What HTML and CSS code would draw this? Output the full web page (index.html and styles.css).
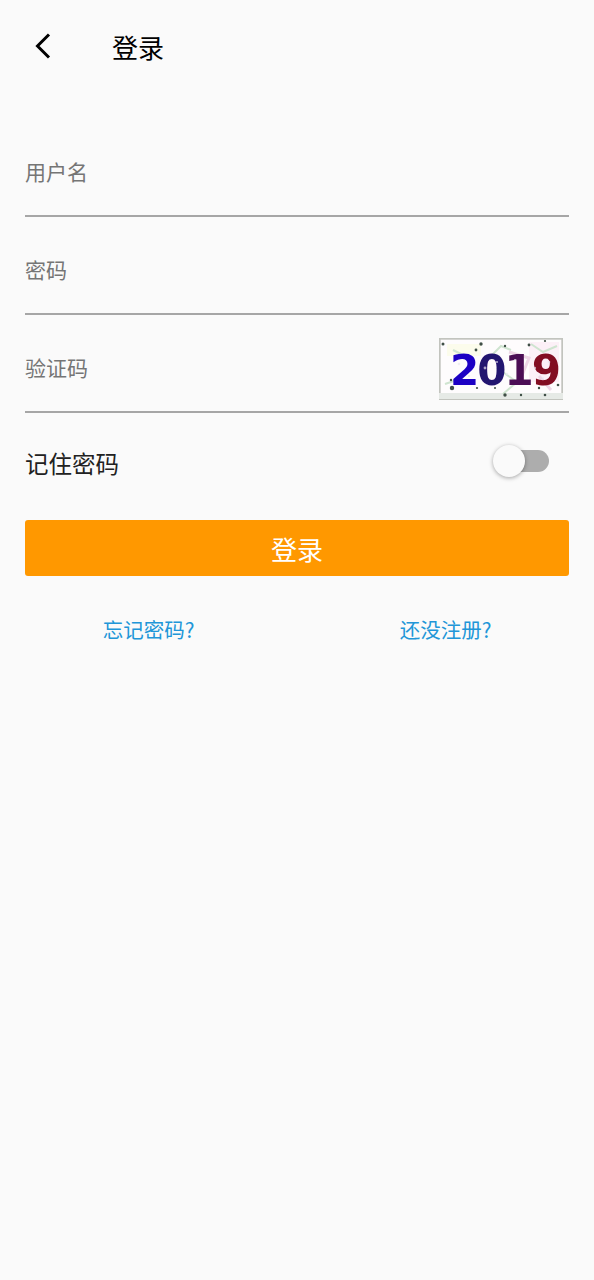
FILE: index.html
```html
<!DOCTYPE html>
<html lang="zh">
<head>
<meta charset="utf-8">
<title>登录</title>
<link rel="stylesheet" href="styles.css">
</head>
<body>
<div class="page">
  <header class="topbar">
    <svg class="back" width="20" height="28" viewBox="0 0 20 28" aria-hidden="true"><path d="M16 2.5 L4.5 14 L16 25.5" fill="none" stroke="#000" stroke-width="3"/></svg>
    <h1 class="title">登录</h1>
  </header>
  <form class="form">
    <div class="field"><span class="placeholder">用户名</span></div>
    <div class="field"><span class="placeholder">密码</span></div>
    <div class="field field-captcha">
      <span class="placeholder placeholder-captcha">验证码</span>
      <svg class="captcha" width="124" height="62" viewBox="0 0 124 62" aria-label="2019">
        <defs>
          <filter id="soft" x="-5%" y="-5%" width="110%" height="110%"><feGaussianBlur stdDeviation="0.7"/></filter>
        </defs>
        <rect width="124" height="62" fill="#fefcfd"/>
        <g filter="url(#soft)">
          <rect x="90" y="4" width="30" height="40" fill="#fcf0f7"/>
          <rect x="8" y="6" width="34" height="12" fill="#fcfcec"/>
          <rect x="0.8" y="0.8" width="122.4" height="60.4" fill="none" stroke="#c2c4be" stroke-width="1.8"/>
          <rect x="0" y="55" width="124" height="6" fill="#e6eae6"/>
          <path d="M52 18 L62 8 L72 12 M58 30 L78 44 L64 56 M92 6 L104 14 L118 8 M14 12 L30 20 M6 46 L24 40" stroke="#cfe4d0" stroke-width="2" fill="none"/>
          <path d="M70 14 L90 20 L82 40 M100 38 L112 52" stroke="#eed6e6" stroke-width="3" fill="none"/>
          <text class="captcha-text" x="11" y="47"><tspan fill="#1c00c4">2</tspan><tspan fill="#241270">0</tspan><tspan fill="#4c1054">1</tspan><tspan fill="#820820">9</tspan></text>
          <g fill="#e8e8f0" opacity=".7">
            <circle cx="20" cy="26" r="1.3"/><circle cx="30" cy="38" r="1.2"/><circle cx="46" cy="30" r="1.4"/>
            <circle cx="58" cy="24" r="1.1"/><circle cx="68" cy="36" r="1.3"/><circle cx="76" cy="22" r="1.1"/>
            <circle cx="96" cy="30" r="1.2"/><circle cx="110" cy="24" r="1.3"/><circle cx="104" cy="40" r="1.1"/>
          </g>
          <g fill="#3f4f46">
            <circle cx="42" cy="6" r="1.7"/><circle cx="4" cy="6" r="1.5"/><circle cx="37" cy="12" r="1.4"/>
            <circle cx="66" cy="8" r="1.2"/><circle cx="90" cy="7" r="1.4"/><circle cx="106" cy="3" r="1.1"/>
            <circle cx="12" cy="42" r="1.2"/><circle cx="13" cy="50" r="2.2"/><circle cx="66" cy="57" r="1.7"/>
            <circle cx="82" cy="57" r="1.2"/><circle cx="106" cy="57" r="1.3"/><circle cx="119" cy="47" r="1.3"/>
            <circle cx="38" cy="50" r="1.1"/><circle cx="100" cy="50" r="1.2"/><circle cx="56" cy="50" r="1"/>
          </g>
        </g>
      </svg>
    </div>
    <div class="remember">
      <span class="remember-label">记住密码</span>
      <span class="switch"><span class="switch-thumb"></span></span>
    </div>
    <button class="submit" type="button">登录</button>
    <div class="links">
      <a class="link">忘记密码?</a>
      <a class="link">还没注册?</a>
    </div>
  </form>
</div>
</body>
</html>
```
FILE: styles.css
```css
* { box-sizing: border-box; }
html, body { margin: 0; padding: 0; }
body {
  background: #fafafa;
  font-family: "Noto Sans CJK SC", "Noto Sans", sans-serif;
  height: 1280px;
  overflow: hidden;
}
.page { display: flex; flex-direction: column; }
.topbar {
  display: flex;
  align-items: center;
  height: 98px;
  padding-left: 33px;
}
.back { display: block; margin-top: -7px; }
.title {
  margin: -4px 0 0 59px;
  font-size: 26px;
  font-weight: 400;
  line-height: 36px;
  color: #000;
}
.form {
  display: flex;
  flex-direction: column;
  padding: 21px 25px 0;
}
.field {
  display: flex;
  align-items: center;
  justify-content: space-between;
  height: 98px;
  padding-top: 11px;
  padding-bottom: 3px;
  border-bottom: 2px solid #a6a6a6;
}
.field-captcha { padding-top: 18px; padding-bottom: 6px; padding-right: 6px; }
.placeholder {
  font-size: 21px;
  line-height: 30px;
  color: #757575;
}
.placeholder-captcha { margin-top: -4px; }
.captcha { display: block; }
.captcha-text {
  font-family: "DejaVu Sans", sans-serif;
  font-weight: 700;
  font-size: 42px;
  letter-spacing: -2px;
}
.remember {
  display: flex;
  align-items: center;
  justify-content: space-between;
  height: 107px;
  padding-right: 20px;
}
.remember-label {
  font-size: 23.5px;
  line-height: 32px;
  color: #212121;
  margin-top: -7px;
}
.switch {
  position: relative;
  display: block;
  width: 42px;
  height: 22px;
  margin-top: -11px;
  border-radius: 11px;
  background: #adadad;
}
.switch-thumb {
  position: absolute;
  left: -14px;
  top: -5px;
  width: 32px;
  height: 32px;
  border-radius: 50%;
  background: #fafafa;
  box-shadow: 0 1px 4px rgba(0,0,0,.35);
}
.submit {
  display: block;
  width: 100%;
  height: 56px;
  border: 0;
  border-radius: 3px;
  background: #ff9800;
  color: #fff;
  font: inherit;
  font-size: 26px;
  padding: 0;
}
.links {
  display: grid;
  grid-template-columns: 1fr 1fr;
  margin: 35px -25px 0;
}
.link {
  text-align: center;
  font-size: 20.5px;
  line-height: 36px;
  color: #2196d8;
}
```
